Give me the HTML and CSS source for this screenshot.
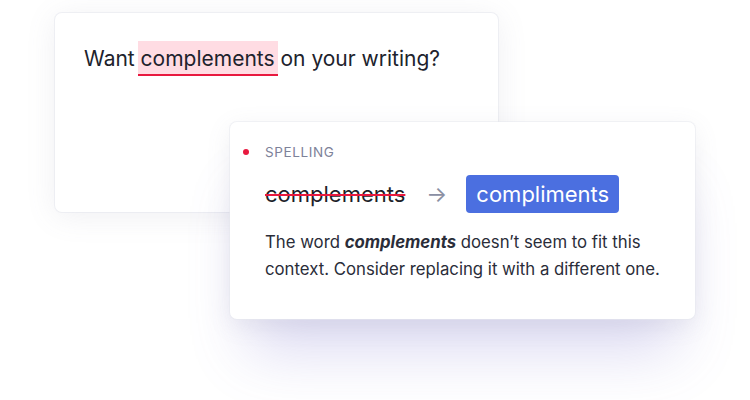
FILE: index.html
```html
<!DOCTYPE html>
<html>
<head>
<meta charset="utf-8">
<link rel="stylesheet" href="styles.css">
</head>
<body>
<div class="stage">
  <div class="card card-editor">
    <p class="sentence">Want <span class="flag">complements</span> on your writing?</p>
  </div>
  <div class="card card-suggest">
    <div class="label"><span class="dot"></span><span class="label-text">SPELLING</span></div>
    <div class="fix">
      <span class="wrong">complements</span>
      <span class="arrow">→</span>
      <span class="right">compliments</span>
    </div>
    <p class="explain">The word <b><i>complements</i></b> doesn’t seem to fit this context. Consider replacing it with a different one.</p>
  </div>
</div>
</body>
</html>
```
FILE: styles.css
```css
html, body {
  margin: 0;
  padding: 0;
  background: #ffffff;
}
body {
  width: 750px;
  height: 400px;
  overflow: hidden;
  font-family: Inter, "Noto Sans", sans-serif;
  color: #1d1f29;
}
.stage {
  position: relative;
  width: 750px;
  height: 400px;
  padding: 13px 0 0 55px;
  box-sizing: border-box;
}
.card {
  background: #fff;
  border-radius: 7px;
  box-sizing: border-box;
}
.card-editor {
  width: 443px;
  height: 199px;
  padding: 29px 0 0 29px;
  box-shadow: 0 0 0 1px rgba(230, 232, 238, 0.6), 0 4px 30px rgba(120, 125, 150, 0.12);
}
.sentence {
  margin: 0;
  font-size: 21px;
  line-height: 34px;
  color: #20222c;
}
.flag {
  background: #ffdce3;
  border-bottom: 2px solid #e8193f;
  padding: 5px 3px 3px;
  margin: 0 -3px;
}
.card-suggest {
  position: absolute;
  left: 230px;
  top: 122px;
  width: 465px;
  height: 197px;
  padding: 22px 0 0 35px;
  box-shadow: 0 0 0 1px rgba(230, 232, 238, 0.5), 0 6px 24px rgba(120, 125, 150, 0.12), 0 50px 60px -18px rgba(110, 100, 200, 0.24);
}
.label {
  display: flex;
  align-items: center;
  height: 16px;
}
.dot {
  width: 6px;
  height: 6px;
  border-radius: 50%;
  background: #e8193f;
  margin-left: -22px;
  margin-right: 16px;
}
.label-text {
  font-size: 13.5px;
  letter-spacing: 0.6px;
  color: #7d8299;
}
.fix {
  display: flex;
  align-items: center;
  margin-top: 15px;
  height: 38px;
}
.wrong {
  font-size: 22px;
  text-decoration: line-through;
  text-decoration-color: #e8193f;
  text-decoration-thickness: 1.5px;
  color: #1d1f29;
}
.arrow {
  font-size: 22px;
  color: #8a8fa3;
  margin: 0 19px 0 21px;
}
.right {
  background: #4b6fe0;
  color: #fff;
  font-size: 22px;
  border-radius: 4px;
  height: 38px;
  line-height: 38px;
  padding: 0 10px;
}
.explain {
  margin: 16px 0 0;
  font-size: 16.75px;
  line-height: 27px;
  color: #2a2d39;
  width: 420px;
}
.explain b {
  font-weight: 700;
}
```
